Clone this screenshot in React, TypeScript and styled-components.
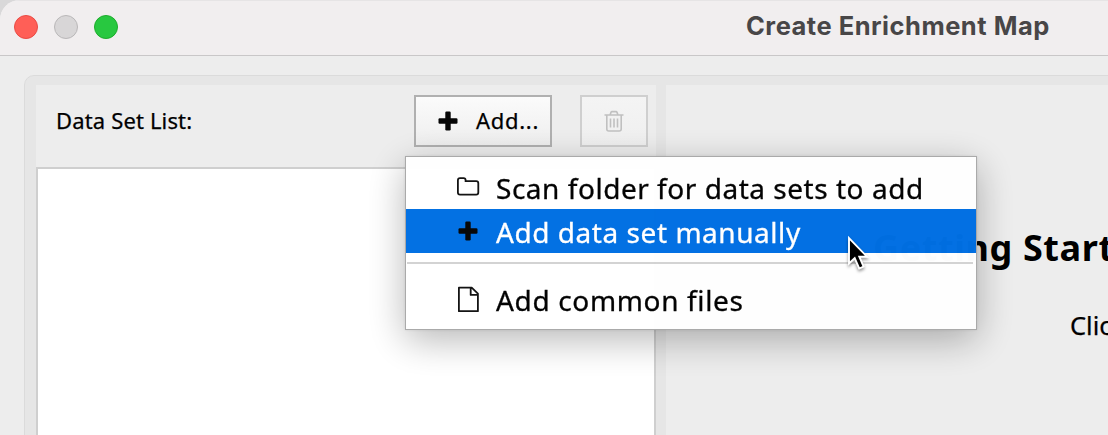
import React from "react";
import styled, { createGlobalStyle, css } from "styled-components";

const Global = createGlobalStyle`
  * { box-sizing: border-box; }
  html, body { margin: 0; height: 100%; overflow: hidden; }
  body { background: #d9d8d9; font-family: "Noto Sans", sans-serif; color: #000; }
`;

const Window = styled.div`
  position: relative;
  width: 1108px;
  height: 435px;
  overflow: hidden;
  display: flex;
  flex-direction: column;
  background: #ededed;
  border-top-left-radius: 20px;
`;

const TitleBar = styled.header`
  flex: none;
  height: 56px;
  display: flex;
  align-items: center;
  padding: 0 0 3px 14px;
  background: #f1eeef;
  border-top: 1px solid #e6e4e5;
  border-bottom: 1px solid #c9c7c8;
`;

const Lights = styled.div`
  display: flex;
  gap: 16px;
  width: 732px;
`;

const Light = styled.span<{ $fill: string; $edge: string }>`
  width: 24px;
  height: 24px;
  border-radius: 50%;
  background: ${(p) => p.$fill};
  border: 1px solid ${(p) => p.$edge};
`;

const Title = styled.h1`
  margin: 0;
  padding-bottom: 2px;
  font: 700 25.5px/32px Inter, sans-serif;
  letter-spacing: 0.5px;
  color: #484647;
  white-space: nowrap;
`;

const Frame = styled.main`
  flex: 1;
  display: flex;
  gap: 10px;
  margin: 19px -20px -20px 24px;
  padding: 9px 0 0 11px;
  background: #e6e6e6;
  border: 1px solid #dbdbdb;
  border-radius: 10px;
`;

const Sidebar = styled.section`
  flex: none;
  width: 620px;
  display: flex;
  flex-direction: column;
  background: #ededed;
`;

const Toolbar = styled.div`
  flex: none;
  height: 82px;
  display: flex;
  align-items: flex-start;
  padding: 10px 8px 0 20px;
`;

const Label = styled.span`
  flex: 1;
  font-size: 22px;
  line-height: 51px;
  letter-spacing: 0.15px;
  -webkit-text-stroke: 0.25px currentColor;
  white-space: nowrap;
`;

const Button = styled.button<{ $width: number; $off?: boolean }>`
  width: ${(p) => p.$width}px;
  height: 52px;
  display: flex;
  align-items: center;
  padding: 0 0 0 22px;
  border: 2px solid ${(p) => (p.$off ? "#cfcfcf" : "#b0b0b0")};
  background: ${(p) => (p.$off ? "linear-gradient(#f4f4f4, #efefef)" : "linear-gradient(#fbfbfb, #eeeeee)")};
  margin-left: ${(p) => (p.$off ? 28 : 0)}px;
  font: 22px/46px "Noto Sans", sans-serif;
  color: #000;
`;

const ButtonText = styled.span`
  margin-left: 18px;
  padding-bottom: 2px;
  letter-spacing: 0.7px;
  -webkit-text-stroke: 0.25px currentColor;
`;

const List = styled.div`
  flex: 1;
  background: #fff;
  border: 2px solid #cfcfcf;
`;

const Content = styled.section`
  flex: 1;
  padding: 140px 0 0 207px;
  background: #ededed;
  white-space: nowrap;
  overflow: hidden;
`;

const Heading = styled.h2`
  margin: 0;
  font-size: 36px;
  line-height: 46px;
  font-weight: 700;
  letter-spacing: 0.6px;
`;

const Hint = styled.p`
  margin: 38px 0 0 197px;
  font-size: 25.5px;
  line-height: 32px;
  -webkit-text-stroke: 0.25px currentColor;
`;

const Menu = styled.div`
  position: absolute;
  left: 405px;
  top: 156px;
  width: 572px;
  height: 174px;
  padding: 8px 0;
  background: #fff;
  opacity: 0.985;
  border: 1px solid #a9a9a9;
  box-shadow: 0 10px 36px rgba(0, 0, 0, 0.29), 0 0 3px rgba(0, 0, 0, 0.1);
`;

const Item = styled.div<{ $active?: boolean }>`
  height: 44px;
  display: flex;
  align-items: center;
  padding-left: 50px;
  font-size: 28px;
  line-height: 42px;
  white-space: nowrap;
  ${(p) =>
    p.$active &&
    css`
      background: #006fe3;
      color: #fff;
    `}
`;

const ItemText = styled.span<{ $spacing: number }>`
  padding-top: 1px;
  margin-left: 16px;
  letter-spacing: ${(p) => p.$spacing}px;
  -webkit-text-stroke: 0.3px currentColor;
`;

const Rule = styled.div`
  height: 2px;
  margin: 9px 3px 13px 1px;
  background: #d3d3d3;
`;

const Pointer = styled.svg`
  position: absolute;
  left: 844px;
  top: 234px;
  filter: drop-shadow(0 2px 1.5px rgba(0, 0, 0, 0.4));
`;

const Plus = ({ size = 24 }: { size?: number }) => (
  <svg width={size} height="24" viewBox={`${(24 - size) / 2} 0 ${size} 24`} fill="#050505">
    <rect x="2.5" y="9.3" width="19" height="5.4" rx="1.2" />
    <rect x="9.3" y="2.5" width="5.4" height="19" rx="1.2" />
  </svg>
);

const Trash = () => (
  <svg width="20" height="22" viewBox="0 0 20 22" fill="none" stroke="#c0c0c0" strokeWidth="1.6">
    <path d="M.5 5h19M6 5l1-2.6q.3-.8 1-.8h4q.7 0 1 .8l1 2.6M2.8 5v14q0 2 2 2h10.4q2 0 2-2V5M6.5 8.5v9M10 8.5v9M13.5 8.5v9" />
  </svg>
);

const Folder = () => (
  <svg width="24" height="24" viewBox="0 0 24 24" fill="none" stroke="#111" strokeWidth="1.8">
    <path d="M1.9 5.2q0-2.1 2.1-2.1h3.6q2 0 2 2.1v.9h10.6q2.1 0 2.1 2.1v9.4q0 2.1-2.1 2.1H4q-2.1 0-2.1-2.1z" />
  </svg>
);

const File = () => (
  <svg width="24" height="28" viewBox="0 0 24 28" fill="none" stroke="#111" strokeWidth="1.8" strokeLinejoin="round">
    <path d="M2.9 2.7h12.8l6.2 6v17.5h-19zM14.7 2.7v7.2h7.2" />
  </svg>
);

export default function App() {
  return (
    <>
      <Global />
      <Window>
        <TitleBar>
          <Lights>
            <Light $fill="#ff5f57" $edge="#e94b45" />
            <Light $fill="#d8d6d7" $edge="#b9b7b8" />
            <Light $fill="#28c840" $edge="#1eac2c" />
          </Lights>
          <Title>Create Enrichment Map</Title>
        </TitleBar>
        <Frame>
          <Sidebar>
            <Toolbar>
              <Label>Data Set List:</Label>
              <Button $width={138}>
                <Plus size={20} />
                <ButtonText>Add...</ButtonText>
              </Button>
              <Button $width={68} $off aria-label="Delete">
                <Trash />
              </Button>
            </Toolbar>
            <List />
          </Sidebar>
          <Content>
            <Heading>Getting Started</Heading>
            <Hint>Click</Hint>
          </Content>
        </Frame>
        <Menu>
          <Item>
            <Folder />
            <ItemText $spacing={0.53}>Scan folder for data sets to add</ItemText>
          </Item>
          <Item $active>
            <Plus />
            <ItemText $spacing={0.55}>Add data set manually</ItemText>
          </Item>
          <Rule />
          <Item>
            <File />
            <ItemText $spacing={0.65}>Add common files</ItemText>
          </Item>
        </Menu>
        <Pointer width="28" height="40" viewBox="0 0 28 40">
          <path
            d="M5 4v25.5l5.7-5.3 4.5 10.3 4.4-1.9-4.3-9.9h7.7z"
            fill="#000"
            stroke="#fff"
            strokeWidth="1.9"
          />
        </Pointer>
      </Window>
    </>
  );
}
